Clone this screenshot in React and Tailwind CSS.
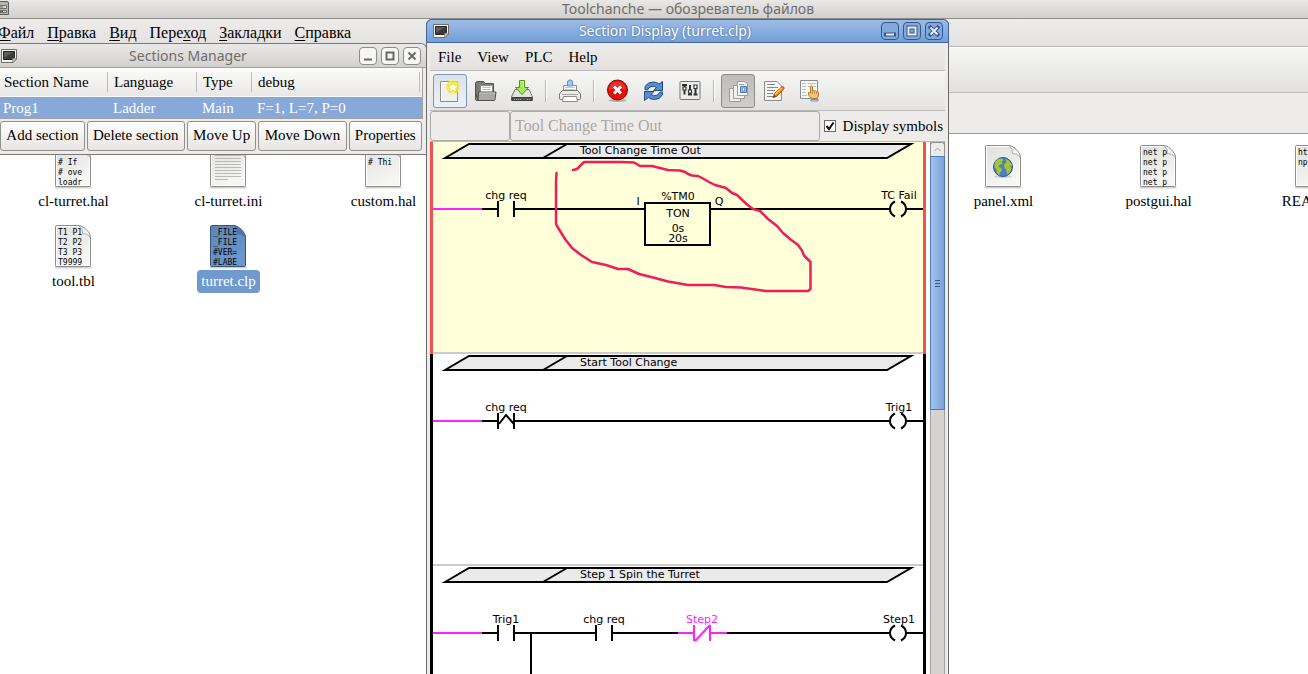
import React, { useState } from 'react';

const fileMenus = [
    ['', 'Ф', 'айл'],
    ['', 'П', 'равка'],
    ['', 'В', 'ид'],
    ['Пере', 'х', 'од'],
    ['', 'З', 'акладки'],
    ['', 'С', 'правка'],
];

const files = [
    { name: 'cl-turret.hal', lines: ['', '# If', '# ove', 'loadr'], cell: 'col-start-1 row-start-1' },
    { name: 'cl-turret.ini', kind: 'text', cell: 'col-start-2 row-start-1' },
    { name: 'custom.hal', lines: ['', '# Thi'], cell: 'col-start-3 row-start-1' },
    { name: 'panel.xml', kind: 'globe', cell: 'col-start-7 row-start-1' },
    { name: 'postgui.hal', lines: ['net p', 'net p', 'net p', 'net p'], cell: 'col-start-8 row-start-1' },
    { name: 'README', lines: ['ht', 'np'], cell: 'col-start-9 row-start-1' },
    { name: 'tool.tbl', lines: ['T1 P1', 'T2 P2', 'T3 P3', 'T9999'], cell: 'col-start-1 row-start-2' },
    { name: 'turret.clp', lines: ['_FILE', '_FILE', '#VER=', '#LABE'], selected: true, cell: 'col-start-2 row-start-2' },
];

const FileIcon = ({ kind, lines = [], selected }) => (
    <svg width="38" height="44" viewBox="0 0 38 44" className="block">
        <defs>
            <linearGradient id="paper" x1="0" y1="0" x2="0.4" y2="1">
                <stop offset="0" stopColor="#dfe1dc" />
                <stop offset="1" stopColor="#f6f6f5" />
            </linearGradient>
            <linearGradient id="paperSelected" x1="0" y1="0" x2="0.3" y2="1">
                <stop offset="0" stopColor="#5d84b4" />
                <stop offset="1" stopColor="#6c98ce" />
            </linearGradient>
        </defs>
        <path d="M0 42.5H36.5" stroke="#000" strokeOpacity="0.18" strokeWidth="2" />
        <path
            d="M2 0.5H24C29 1.5 34.5 6.5 35.5 12V40.5Q35.5 41.5 34.5 41.5H1.5Q0.5 41.5 0.5 40.5V2Q0.5 0.5 2 0.5Z"
            fill={selected ? 'url(#paperSelected)' : 'url(#paper)'}
            stroke={selected ? '#35557f' : '#8b8d89'}
        />
        {!selected && <path d="M1.5 40.5V1.5H24M1.5 40.5H34.5V13" fill="none" stroke="#fff" />}
        <path
            d="M24 0.5Q28 4 27.5 8.5Q31 8 35.5 12C34.5 6.5 29 1.5 24 0.5Z"
            fill={selected ? '#4f79ad' : '#f3f4f2'}
            stroke={selected ? '#45699a' : '#9c9e9a'}
            strokeWidth="0.8"
        />
        {lines.map((line, i) => (
            <text key={i} x="3" y={10 + i * 10} fontSize="8" xmlSpace="preserve" className="font-['DejaVu_Sans_Mono',monospace]">{line}</text>
        ))}
        {kind === 'text' && (
            <path
                d="M5 7.5H26M5 10.5H31M5 13.5H31M5 16.5H31M5 19.5H31M5 22.5H31M5 25.5H31M5 28.5H31M5 31.5H31M5 34.5H18"
                stroke="#b9bbb7"
            />
        )}
        {kind === 'globe' && (
            <g>
                <ellipse cx="18" cy="31.5" rx="9" ry="1.5" fill="#000" opacity="0.15" />
                <circle cx="18" cy="22" r="9.5" fill="#4a7fc4" stroke="#2b5694" />
                <path d="M10 17L13 14L17 13.5L18.5 15L16.5 17L17.5 18.5L14.5 20L13.5 22L16 23L17 25.5L15 27.5L14.5 30.5L12 28L11.5 24.5L9.5 22Z" fill="#a9c52c" />
                <path d="M20.5 14L24 15.5L27 20L26 21.5L24.5 20.5L26.5 23.5L24 28.5L22 29.5L21.5 25L19.5 23L19 19.5L21.5 17.5Z" fill="#a9c52c" />
            </g>
        )}
    </svg>
);

const AppIcon = () => (
    <svg width="16" height="14" viewBox="0 0 16 14" className="block shrink-0">
        <path d="M0.5 0.5H15.5V10L12 13.5H0.5Z" fill="#f4f4f2" stroke="#6c6c69" />
        <path d="M2.5 2.5H13.5V8.5L11 10.5H2.5Z" fill="#3a3d3c" stroke="#242625" />
        <path d="M3 9L12 3H3Z" fill="#5a5e5c" />
        <path d="M15.5 10L11.5 9.5L12 13.5Z" fill="#d9d9d6" stroke="#6c6c69" strokeWidth="0.8" />
    </svg>
);

const windowGlyphs = {
    minimize: 'M5 12.5H13',
    maximize: 'M5.5 5.5H12.5V12.5H5.5Z',
    close: 'M5.5 5.5L12.5 12.5M12.5 5.5L5.5 12.5',
};

const WindowButtons = ({ active }) => (
    <div className="flex gap-1">
        {['minimize', 'maximize', 'close'].map(name => (
            <button
                key={name}
                aria-label={name}
                className={active
                    ? 'h-[18px] w-[18px] rounded-sm border border-[#34588c] bg-[#83a8da]'
                    : 'h-[18px] w-[18px] rounded-sm border border-[#8d8b88] bg-[#f6f6f5]'}
            >
                <svg width="18" height="18" viewBox="0 0 18 18" fill="none" className="-m-px block">
                    {active && <path d={windowGlyphs[name]} stroke="#34588c" strokeWidth="4" strokeLinecap="square" />}
                    <path d={windowGlyphs[name]} stroke={active ? '#e6eefa' : '#6b6966'} strokeWidth="2" />
                </svg>
            </button>
        ))}
    </div>
);

const FileManager = () => (
    <div className="flex h-full flex-col">
        <div className="relative flex h-[19px] items-center justify-center border-b border-[#8f8d8a] bg-linear-to-b from-[#e9e8e7] to-[#d3d1cf] pl-[68px]">
            <svg width="9" height="14" viewBox="0 0 9 14" className="absolute top-px left-0">
                <path d="M-6 0.5H7Q8.5 0.5 8.5 2V13.5H-6Z" fill="#b4b5ae" stroke="#5d5e59" />
                <path d="M-6 4.5H6.5V7.5H-6ZM-6 9.5H6.5V11.5H-6Z" fill="#d6d7d1" stroke="#6e6f69" />
                <path d="M0 6H3M0 10.5H3" stroke="#5d5e59" />
            </svg>
            <h1 className="font-['Noto_Sans',sans-serif] text-[14px] leading-4 whitespace-nowrap text-[#6f6d6a]">Toolchanche — обозреватель файлов</h1>
        </div>
        <nav className="flex h-7 items-center gap-[13px] border-b border-[#bdbbb9] bg-linear-to-b from-[#edecea] to-[#e3e2e0]">
            {fileMenus.map(([before, key, after]) => (
                <button key={key} className="text-[16px] leading-5 first:-ml-0.5">{before}<u className="underline-offset-2">{key}</u>{after}</button>
            ))}
        </nav>
        <div className="h-[46px] border-y border-t-white border-b-[#bdbbb9] bg-linear-to-b from-[#f6f6f5] to-[#e2e1df]" />
        <div className="h-[41px] border-b border-[#999896] bg-[#edeceb]" />
        <div className="-ml-1 grid flex-1 auto-rows-[80px] grid-cols-[repeat(9,155px)] bg-white pt-[11px]">
            {files.map(file => (
                <div key={file.name} className={`flex flex-col items-center ${file.cell}`}>
                    <FileIcon {...file} />
                    <span className={file.selected ? 'mt-px h-[23px] rounded bg-[#7099cd] px-1 text-[15px] leading-[22px] text-white' : 'mt-px h-[23px] px-1 text-[15px] leading-[22px]'}>{file.name}</span>
                </div>
            ))}
        </div>
    </div>
);

const SectionsManager = () => (
    <section className="absolute top-[43px] left-0 flex h-[112px] w-[427px] flex-col rounded-tr-md border-t border-r border-b border-[#7b7977] bg-[#edeceb]">
        <div className="flex h-6 shrink-0 items-center rounded-tr-md border-b border-[#a3a19f] bg-linear-to-b from-[#eae9e8] to-[#d3d1cf] pr-[5px] pl-px">
            <AppIcon />
            <h2 className="flex-1 text-center font-['Noto_Sans',sans-serif] text-[14px] leading-5 text-[#6f6d6a]">Sections Manager</h2>
            <WindowButtons />
        </div>
        <div className="mr-[3px] border-r border-b border-[#a3a19f] bg-white">
            <table className="w-full table-fixed border-collapse text-left text-[15px] leading-5">
                <colgroup>
                    <col className="w-[110px]" />
                    <col className="w-[89px]" />
                    <col className="w-[55px]" />
                    <col />
                </colgroup>
                <thead>
                    <tr className="h-[29px] border-b border-[#a3a19f] bg-linear-to-b from-[#fbfbfa] to-[#e9e8e6]">
                        {['Section Name', 'Language', 'Type', 'debug'].map(title => (
                            <th key={title} className="py-1 pl-1 font-normal">
                                <div className="-my-px mr-0.5 border-r border-[#bdbbb9]">{title}</div>
                            </th>
                        ))}
                    </tr>
                </thead>
                <tbody>
                    <tr className="h-5 bg-[#86a9d9] text-white">
                        {['Prog1', 'Ladder', 'Main', 'F=1, L=7, P=0'].map(value => (
                            <td key={value} className="py-0 pl-[3px]">{value}</td>
                        ))}
                    </tr>
                </tbody>
            </table>
        </div>
        <div className="mt-0.5 mr-1 flex h-[30px] gap-0.5">
            {['Add section', 'Delete section', 'Move Up', 'Move Down', 'Properties'].map(label => (
                <button key={label} className="flex-auto rounded-[3px] border border-[#92908d] bg-linear-to-b from-white to-[#e6e5e3] text-[15px] whitespace-nowrap">{label}</button>
            ))}
        </div>
    </section>
);

const toolIcons = {
    New: (
        <g>
            <path d="M2.5 2.5H19.5V22.5H2.5Z" fill="#f0f0ee" stroke="#8b8d89" />
            <path d="M3.5 21.5V3.5H10" stroke="#fff" />
            <circle cx="15" cy="8" r="7" fill="#f8ee3c" opacity="0.8" />
            <path d="M15 2.500L16.800 6L20.500 6.500L18 9.300L18.600 13L15 11.400L11.400 13L12 9.300L9.500 6.500L13.200 6Z" fill="#fff" stroke="#f0dc00" />
        </g>
    ),
    Open: (
        <g>
            <path d="M1.5 20V4.500Q1.500 2.500 3.500 2.500H9.500L11 4.500H19.500V20Z" fill="#7d7f77" stroke="#4f514b" />
            <path d="M6.500 6.500H18.500V15H6.500Z" fill="#fff" stroke="#8b8d89" />
            <path d="M8.500 8.500H16.500M8.500 10.500H16.500" stroke="#babdb6" />
            <path d="M4 21.500L4.500 13H22L21 20.500Q20.800 21.500 20 21.500H3Q1.500 21.500 1.500 20L2 15Z" fill="#a9aba2" stroke="#4f514b" />
            <path d="M5.500 14H21" stroke="#c9cbc3" />
        </g>
    ),
    Save: (
        <g>
            <path d="M5 10.5H19L22.500 18V21.500H1.500V18Z" fill="#e3e5e0" stroke="#74766f" />
            <path d="M2 18.500H22V21.500H2Z" fill="#555753" stroke="#3c3e3a" />
            <path d="M4 20.500H12M17 20.500H20" stroke="#a3a59f" strokeDasharray="1 1" />
            <path d="M9.500 1.500H14.500V8.500H18.500L12 15.500L5.500 8.500H9.500Z" fill="#a6e75c" stroke="#4e9a06" />
            <path d="M10.500 2.500H13.500V9" stroke="#e4fbc8" />
        </g>
    ),
    Print: (
        <g>
            <path d="M5.500 6.500H18.500V12H5.500Z" fill="#fff" stroke="#8b8d89" />
            <path d="M7 8.500H17M7 10.500H17" stroke="#c9cbc6" />
            <path d="M9.500 7V3Q9.500 1 12 1Q14.500 1 14.500 3V7Z" fill="#a9c8ec" stroke="#5f8fc9" />
            <path d="M4.500 11.500H19.500L22.500 15V19.500Q22.500 20.500 21.500 20.500H2.500Q1.500 20.500 1.500 19.500V15Z" fill="#ecedea" stroke="#74766f" />
            <path d="M4 15.500H20" stroke="#a3a59f" />
            <path d="M5.500 17.500H18.500L19.500 22.500H4.500Z" fill="#fff" stroke="#8b8d89" />
        </g>
    ),
    Stop: (
        <g>
            <ellipse cx="11.500" cy="21.500" rx="9" ry="1.500" fill="#000" opacity="0.25" />
            <circle cx="11.500" cy="11" r="10" fill="#e01208" stroke="#a40000" />
            <path d="M3 11A8.500 8.500 0 0 1 20 11Q11 8 3 11Z" fill="#fff" opacity="0.15" />
            <path d="M8 7.500L15 14.500M15 7.500L8 14.500" stroke="#fff" strokeWidth="3" />
        </g>
    ),
    Refresh: (
        <g fill="#5b8ccc" stroke="#204a87">
            <path d="M3 10.500L3 7.500Q6 3 11 3Q15 3 17 5L20.500 2.500V11.500H11.500L14.500 8.500Q12 6.500 9 7.500Q6.500 8.500 5.500 11Z" />
            <path d="M20.500 13L20.500 16Q17.500 20.500 12.500 20.500Q8.500 20.500 6.500 18.500L2.500 21.500V12.500H12L9 15.500Q11.500 17.500 14.500 16.500Q17 15.500 18 13Z" />
        </g>
    ),
    Preferences: (
        <g>
            <path d="M3 2.500H21Q22 2.500 22 3.500V19.500Q22 20.500 21 20.500H3Q2 20.500 2 19.500V3.500Q2 2.500 3 2.500Z" fill="#ecedea" stroke="#74766f" />
            <path d="M4 6H9M6.500 6V15.500M12 6V15M10 15.500H14M17.500 9V15.500M15.500 15.500H19.500" stroke="#2e3436" strokeWidth="2" />
            <path d="M5 8H8V11H5ZM10.500 11H13.500V14H10.500ZM16 6H19V9.500H16Z" fill="#fff" stroke="#2e3436" strokeWidth="1.200" />
        </g>
    ),
    Sections: (
        <g stroke="#9a9c98">
            <path d="M3.500 9.500H14.500V22.500H3.500Z" fill="#eeefec" />
            <path d="M7.500 6.500H18.500V19.500H7.500Z" fill="#f2f3f0" />
            <path d="M11.500 2.500H19L21.500 5V16.500H11.500Z" fill="#f6f6f5" />
            <path d="M13 5.500H18" />
            <path d="M14.500 7.500H20.500V13.500H14.500Z" fill="#9dbbe3" stroke="#4a78b5" />
            <path d="M16.500 9H18.500V12H16.500Z" fill="#fff" stroke="#4a78b5" strokeWidth="0.600" />
        </g>
    ),
    Edit: (
        <g>
            <path d="M2.500 2.500H15L19.500 7V21.500H2.500Z" fill="#f6f6f5" stroke="#8b8d89" />
            <path d="M5 5.500H13M5 8.500H16M5 11.500H13M5 14.500H11M5 17.500H15" stroke="#888a85" />
            <path d="M11 18.500L12.500 14.500L19.500 8Q21 7 22 8.500Q22.500 9.500 21.500 10.500L14.500 17.500Z" fill="#f57900" stroke="#b04c00" strokeWidth="0.800" />
            <path d="M13 15.500L20 9" stroke="#fcd24f" strokeWidth="1.200" />
            <path d="M11 18.500L12 16L13.500 17.500Z" fill="#2e3436" />
        </g>
    ),
    Symbols: (
        <g>
            <path d="M2.500 1.500H19.500V19.500H2.500Z" fill="#f6f6f5" stroke="#8b8d89" />
            <path d="M4 4.500H8M10 4.500H18M4 7.500H8M10 7.500H18M4 10.500H8M4 13.500H8M4 16.500H9" stroke="#b7c4b0" />
            <path d="M12.500 7.500Q13.500 6 14.500 7.500V12Q15.500 11 16.500 12Q17.500 11.500 18.500 12.500Q20.500 12 20.500 14V17L19 19.500H13.500L10.500 16V13.500L12.500 14Z" fill="#f0c586" stroke="#b97a26" />
            <path d="M14.500 12V15M16.500 12.500V15M18.500 13V15" stroke="#b97a26" strokeWidth="0.700" />
            <path d="M13 20.500H20V22H13Z" fill="#fff" stroke="#5b8ccc" />
        </g>
    ),
};

const ToolButton = ({ name, state }) => (
    <button
        aria-label={name}
        className={
            state === 'hover' ? 'mx-px flex h-[34px] w-[34px] items-center justify-center rounded-[3px] border border-[#7e95b8] bg-linear-to-b from-[#dbe1ea] to-[#eef1f6]'
            : state === 'pressed' ? 'mx-px flex h-[34px] w-[34px] items-center justify-center rounded-[3px] border border-[#8d8b88] bg-linear-to-b from-[#bfbdba] to-[#cfcdca]'
            : 'mx-px flex h-[34px] w-[34px] items-center justify-center'
        }
    >
        <svg width="24" height="24" viewBox="0 0 24 24" fill="none">{toolIcons[name]}</svg>
    </button>
);

const Divider = () => <div className="mx-[5px] h-[22px] w-0.5 border-r border-l border-r-white border-l-[#b9b7b5]" />;

// Cells are 49px wide, the wire runs at y = 67
const Wire = ({ from, to, color = '#000' }) => <path d={`M${from} 67H${to}`} stroke={color} strokeWidth="2" />;

const Label = ({ x, y = 57, color = '#000', anchor = 'middle', children }) => (
    <text x={x} y={y} fill={color} textAnchor={anchor} fontSize="11">{children}</text>
);

const Contact = ({ x, name, mark, color = '#000' }) => (
    <g>
        <g stroke={color} strokeWidth="2" fill="none">
            <path d={`M${x} 67h16M${x + 32} 67h17M${x + 16} 59v16M${x + 32} 59v16`} />
            {mark === 'rising' && <path d={`M${x + 17} 70l7 -9l8 9`} />}
            {mark === 'not' && <path d={`M${x + 17} 75l15 -16`} />}
        </g>
        <Label x={x + 24} color={color}>{name}</Label>
    </g>
);

const Coil = ({ name }) => (
    <g>
        <path d="M444 67H460M476 67H493M465 59.500Q460 62 460 67Q460 72 465 74.500M471 59.500Q476 62 476 67Q476 72 471 74.500" stroke="#000" strokeWidth="2" fill="none" />
        <Label x={469}>{name}</Label>
    </g>
);

const Rung = ({ title, current, children }) => (
    <svg width="500" height="212" viewBox="0 0 500 212" className="block shrink-0 font-['DejaVu_Sans',sans-serif]">
        {current && <rect width="496" height="212" fill="#ffffd9" />}
        <path d="M15 16L39 2H481L457 16Z" fill="#eaeaea" stroke="#000" strokeWidth="2" strokeMiterlimit="10" />
        <path d="M113 16L137 2" stroke="#000" strokeWidth="2" />
        <Label x={150} y={12} anchor="start">{title}</Label>
        <Wire from={3} to={52} color="#ff20ff" />
        {children}
        <path d="M0 211H496" stroke="#cbcbcb" strokeWidth="2" />
        <path d="M0 0H3V212H0ZM493 0H496V212H493Z" fill={current ? '#f05252' : '#000'} />
    </svg>
);

const Ladder = () => (
    <div className="flex min-h-0 flex-1 flex-col overflow-hidden bg-white">
        <Rung title="Tool Change Time Out" current>
            <Contact x={52} name="chg req" />
            <Wire from={101} to={215} />
            <rect x="215" y="61" width="65" height="42" fill="none" stroke="#000" strokeWidth="2" />
            <Label x={208} y={63}>I</Label>
            <Label x={289} y={63}>Q</Label>
            <Label x={248} y={58}>%TM0</Label>
            <Label x={248} y={75}>TON</Label>
            <Label x={248} y={90}>0s</Label>
            <Label x={248} y={100}>20s</Label>
            <Wire from={280} to={444} />
            <Coil name="TC Fail" />
            {/* hand drawn mark round the timer */}
            <path
                d="M126.500 31L126 40V82L127 84L135 97L142 106L151 113L162 120L176 123L188 127L198 127L209 132L225 136L238 139.500L258 143H284L296 145L311 145.500L336 149H378L380.500 147V120L374 113.500L372 108.500L368 103L360 97L353 91L347 84L338 77L330 69L323 67L317 62.500L307 53L302 51L296 46L285 43L279 40L272 36L268 34L262 33.500L258 32L255 30L250 28.500L238 28L222 24H210L204 20.500L192 20H154L147 27L143 28"
                fill="none" stroke="#f01e58" strokeWidth="2.500" strokeLinecap="round" strokeLinejoin="round"
            />
        </Rung>
        <Rung title="Start Tool Change">
            <Contact x={52} name="chg req" mark="rising" />
            <Wire from={101} to={444} />
            <Coil name="Trig1" />
        </Rung>
        <Rung title="Step 1 Spin the Turret">
            <Contact x={52} name="Trig1" />
            <path d="M101 67V212" stroke="#000" strokeWidth="2" />
            <Wire from={101} to={150} />
            <Contact x={150} name="chg req" />
            <Wire from={199} to={248} />
            <Contact x={248} name="Step2" mark="not" color="#ff20ff" />
            <Wire from={297} to={444} />
            <Coil name="Step1" />
        </Rung>
    </div>
);

const SectionDisplay = () => {
    const [symbols, setSymbols] = useState(true);

    return (
        <section className="absolute top-[19px] bottom-0 left-[426px] flex w-[523px] flex-col rounded-t-md border-x border-[#6d6b69] bg-[#edeceb]">
            <div className="-mx-px flex h-6 shrink-0 items-center rounded-t-md border border-[#3f65a0] bg-linear-to-b from-[#9dbce6] to-[#759fd6] pr-[5px] pl-1.5">
                <AppIcon />
                <h2 className="flex-1 text-center font-['Noto_Sans',sans-serif] text-[14px] leading-5 text-white [text-shadow:0_0_2px_#34588c]">Section Display (turret.clp)</h2>
                <WindowButtons active />
            </div>
            <div className="flex min-h-0 flex-1 flex-col px-[3px]">
                <nav className="flex h-7 shrink-0 items-center gap-4 border-b border-[#bdbbb9] bg-linear-to-b from-[#edecea] to-[#e3e2e0] pl-2">
                    {['File', 'View', 'PLC', 'Help'].map(menu => <button key={menu} className="text-[15px] leading-5">{menu}</button>)}
                </nav>
                <div className="flex h-10 shrink-0 items-center border-b border-[#bdbbb9] bg-linear-to-b from-[#f6f6f5] to-[#e4e3e1] pl-0.5">
                    <ToolButton name="New" state="hover" />
                    <ToolButton name="Open" />
                    <ToolButton name="Save" />
                    <Divider />
                    <ToolButton name="Print" />
                    <Divider />
                    <ToolButton name="Stop" />
                    <ToolButton name="Refresh" />
                    <ToolButton name="Preferences" />
                    <Divider />
                    <ToolButton name="Sections" state="pressed" />
                    <ToolButton name="Edit" />
                    <ToolButton name="Symbols" />
                </div>
                <div className="flex h-[31px] shrink-0 items-center border-b border-[#bdb9bb]">
                    <input aria-label="Rung label" disabled className="h-[30px] w-20 rounded-[3px] border border-[#adaba8] bg-[#edeceb] px-1" />
                    <input aria-label="Rung comment" disabled defaultValue="Tool Change Time Out" className="h-[30px] min-w-0 flex-1 rounded-[3px] border border-[#adaba8] bg-[#edeceb] px-1 text-[16px] text-[#aaa6a2]" />
                    <label className="relative flex items-center gap-[7px] pr-0.5 pl-1 text-[15px] whitespace-nowrap">
                        <input type="checkbox" checked={symbols} onChange={e => setSymbols(e.target.checked)} className="h-3 w-3 appearance-none border border-[#6b6966] bg-white" />
                        {symbols && (
                            <svg width="12" height="12" viewBox="0 0 12 12" className="pointer-events-none absolute left-1">
                                <path d="M2.500 6L5 9L9.500 2.500" fill="none" stroke="#111" strokeWidth="2" />
                            </svg>
                        )}
                        Display symbols
                    </label>
                </div>
                <div className="flex min-h-0 flex-1">
                    <Ladder />
                    <div className="flex w-[15px] shrink-0 flex-col border-x border-[#a3a19f] bg-[#d4d3d1]">
                        <button aria-label="Scroll up" className="-mx-px flex h-3.5 shrink-0 items-center justify-center rounded-t-[3px] border border-b-0 border-[#92908d] bg-[#ecebe9]">
                            <svg width="7" height="5" viewBox="0 0 7 5"><path d="M0.500 4L3.500 1L6.500 4" fill="none" stroke="#a3a19f" /></svg>
                        </button>
                        <div className="-mx-px flex h-[254px] shrink-0 flex-col items-center justify-center gap-0.5 border border-[#4f79b5] bg-linear-to-r from-[#a3c3ec] to-[#7aa1d8]">
                            <div className="h-px w-[5px] bg-[#34588c]" />
                            <div className="h-px w-[5px] bg-[#34588c]" />
                            <div className="h-px w-[5px] bg-[#34588c]" />
                        </div>
                    </div>
                </div>
            </div>
        </section>
    );
};

const App = () => (
    <main className="relative h-screen overflow-hidden bg-white font-['Liberation_Serif',serif] text-black">
        <FileManager />
        <SectionsManager />
        <SectionDisplay />
    </main>
);

export default App;
